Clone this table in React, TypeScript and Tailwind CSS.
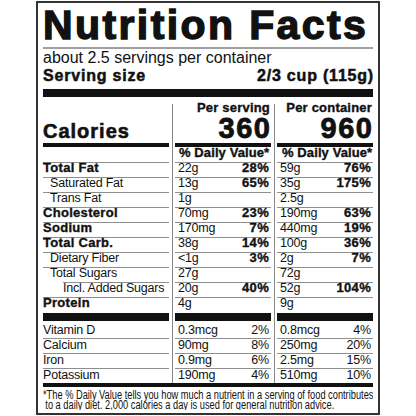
import React from "react";

type Row = {
  label: string;
  bold?: boolean;
  indent?: number;
  a: string;
  ap?: string;
  b: string;
  bp?: string;
};

const rows: Row[] = [
  { label: "Total Fat", bold: true, a: "22g", ap: "28%", b: "59g", bp: "76%" },
  { label: "Saturated Fat", indent: 1, a: "13g", ap: "65%", b: "35g", bp: "175%" },
  { label: "Trans Fat", indent: 1, a: "1g", b: "2.5g" },
  { label: "Cholesterol", bold: true, a: "70mg", ap: "23%", b: "190mg", bp: "63%" },
  { label: "Sodium", bold: true, a: "170mg", ap: "7%", b: "440mg", bp: "19%" },
  { label: "Total Carb.", bold: true, a: "38g", ap: "14%", b: "100g", bp: "36%" },
  { label: "Dietary Fiber", indent: 1, a: "<1g", ap: "3%", b: "2g", bp: "7%" },
  { label: "Total Sugars", indent: 1, a: "27g", b: "72g" },
  { label: "Incl. Added Sugars", indent: 2, a: "20g", ap: "40%", b: "52g", bp: "104%" },
  { label: "Protein", bold: true, a: "4g", b: "9g" },
];

const vitamins = [
  { label: "Vitamin D", a: "0.3mcg", ap: "2%", b: "0.8mcg", bp: "4%" },
  { label: "Calcium", a: "90mg", ap: "8%", b: "250mg", bp: "20%" },
  { label: "Iron", a: "0.9mg", ap: "6%", b: "2.5mg", bp: "15%" },
  { label: "Potassium", a: "190mg", ap: "4%", b: "510mg", bp: "10%" },
];

const line = "border-t border-[#8f8f8f]";
const boldText = "text-[13px] font-bold leading-[10.5px] tracking-[0.3px] [-webkit-text-stroke:0.35px_#111]";
const regular = "text-[12.5px] leading-[11px] tracking-[-0.2px]";

function Separator() {
  return <div className="mt-[4px] mr-[2px] ml-[3px] w-px self-stretch bg-[#8a8a8a]" />;
}

function AmountColumn({
  title,
  calories,
  dvPad,
  which,
}: {
  title: string;
  calories: string;
  dvPad: string;
  which: "a" | "b";
}) {
  return (
    <div className="w-[96px]">
      {/* header */}
      <div className="flex h-[43px] flex-col items-end pt-px">
        <span className="mr-[1px] text-[13px] font-bold leading-[13px] tracking-[0.2px] [-webkit-text-stroke:0.35px_#111]">
          {title}
        </span>
        <span className="-mr-[0.5px] text-[29px] font-bold leading-[28px] tracking-[1.5px] [-webkit-text-stroke:0.8px_#111]">
          {calories}
        </span>
      </div>
      <div className="h-[4px] bg-[#111]" />
      <div className={`flex h-[15px] ${dvPad}`}>
        <span className="text-[13px] font-bold leading-[12px] tracking-[0.1px] [-webkit-text-stroke:0.35px_#111]">
          % Daily Value*
        </span>
      </div>

      {rows.map((r) => {
        const amt = which === "a" ? r.a : r.b;
        const pct = which === "a" ? r.ap : r.bp;
        return (
          <div key={r.label} className={`flex h-[15px] items-start justify-between pr-[2px] pl-[3px] ${line}`}>
            <span className={regular}>{amt}</span>
            {pct && <span className={boldText}>{pct}</span>}
          </div>
        );
      })}

      <div className="mt-px h-[8px] bg-[#111]" />

      {vitamins.map((v, i) => {
        const amt = which === "a" ? v.a : v.b;
        const pct = which === "a" ? v.ap : v.bp;
        return (
          <div
            key={v.label}
            className={`flex items-start justify-between pr-[2px] pl-[3px] text-[12.5px] leading-[12px] tracking-[-0.2px] ${
              i === 0 ? "h-[17px] pt-[3px]" : `h-[15px] ${line}`
            }`}
          >
            <span>{amt}</span>
            <span>{pct}</span>
          </div>
        );
      })}
    </div>
  );
}

export default function App() {
  return (
    <div className="min-h-screen bg-white pt-px font-['Liberation_Sans',Arial,sans-serif] text-[#111]">
      <div className="mx-auto w-[344px] border-2 border-[#333] px-[5px] pb-[3px]">
        {/* Title */}
        <div className="pt-[2px] text-[41px] font-bold leading-[40px] tracking-[2.4px] whitespace-nowrap [-webkit-text-stroke:1.4px_#111]">
          Nutrition Facts
        </div>
        <div className="mt-[2px] h-[2px] bg-[#a0a0a0]" />

        <div className="text-[16px] leading-[18px]">about 2.5 servings per container</div>
        <div className="flex justify-between text-[16px] font-bold leading-[18px] tracking-[0.8px] [-webkit-text-stroke:0.5px_#111]">
          <span>Serving size</span>
          <span className="-mr-[1px]">2/3 cup (115g)</span>
        </div>
        <div className="mt-[4px] h-[8px] bg-[#111]" />

        {/* Table */}
        <div className="mt-[3px] flex">
          <div className="w-[126px]">
            <div className="flex h-[43px] items-end pb-[2.5px]">
              <span className="text-[20px] font-bold leading-[20px] tracking-[1px] [-webkit-text-stroke:0.6px_#111]">
                Calories
              </span>
            </div>
            <div className="h-[4px] bg-[#111]" />
            <div className="h-[15px]" />
            {rows.map((r) => (
              <div
                key={r.label}
                className={`flex h-[15px] items-start ${line} ${
                  r.indent === 2 ? "ml-[20px]" : r.indent === 1 ? "pl-[7px]" : ""
                }`}
              >
                <span className={r.bold ? boldText : regular}>{r.label}</span>
              </div>
            ))}
            <div className="mt-px h-[8px] bg-[#111]" />
            {vitamins.map((v, i) => (
              <div
                key={v.label}
                className={`flex items-start text-[12.5px] leading-[12px] tracking-[-0.2px] ${
                  i === 0 ? "h-[17px] pt-[3px]" : `h-[15px] ${line}`
                }`}
              >
                <span>{v.label}</span>
              </div>
            ))}
          </div>

          <Separator />
          <AmountColumn title="Per serving" calories="360" dvPad="pl-[4px]" which="a" />
          <Separator />
          <AmountColumn title="Per container" calories="960" dvPad="pl-[5px]" which="b" />
        </div>

        <div className="h-[4px] bg-[#111]" />

        {/* Footnote, condensed */}
        <div className="mt-[3px] overflow-hidden text-[12px] leading-[10px]">
          <div className="w-[430px] origin-left scale-x-[0.772] whitespace-nowrap">
            *The % Daily Value tells you how much a nutrient in a serving of food contributes
            <br />
            <span className="ml-[3px]">to a daily diet. 2,000 calories a day is used for general nutrition advice.</span>
          </div>
        </div>
      </div>
    </div>
  );
}
